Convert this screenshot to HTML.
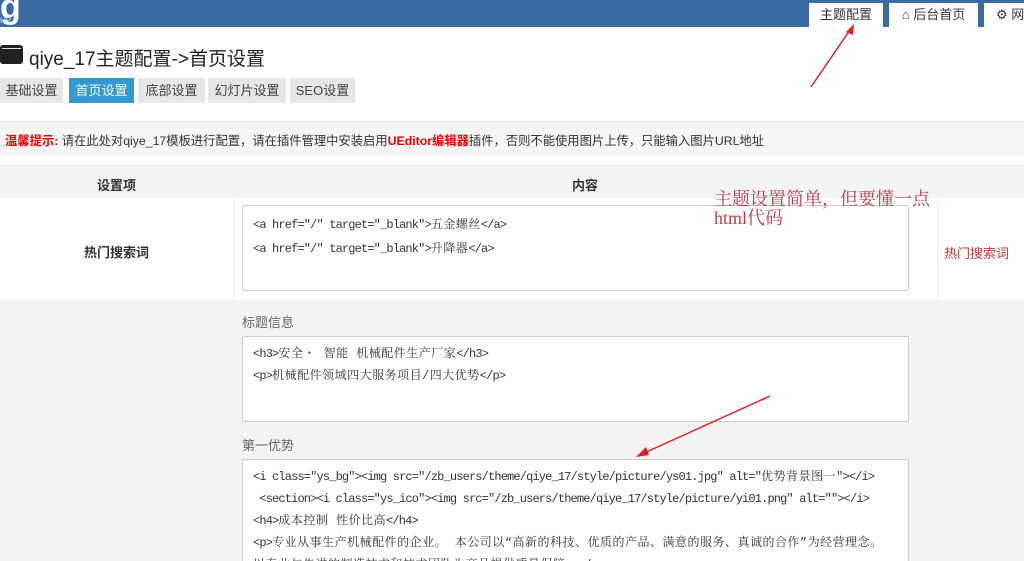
<!DOCTYPE html>
<html><head><meta charset="utf-8"><style>
*{box-sizing:border-box;margin:0;padding:0}
html,body{width:1024px;height:561px;overflow:hidden}
body{background:#fff;font-family:"Liberation Sans","Noto Sans CJK SC",sans-serif;font-size:13px;color:#333;position:relative}
.abs{position:absolute}
.top{left:0;top:0;width:1024px;height:27px;background:#3a6ca3}
.ttab{top:3px;height:24px;background:#fff;font-size:13px;line-height:24px;text-align:center;color:#333}
.tab{top:78px;height:25px;line-height:25px;background:#e6e6e6;font-size:13px;color:#444;text-align:center}
.mono{font-family:"Liberation Mono","Noto Serif CJK SC",monospace;font-size:12px;color:#333;letter-spacing:-0.85px}
.mono s{text-decoration:none;letter-spacing:0.5px}
.ta{background:#fff;border:1px solid #ccc;border-radius:2px}
</style></head><body>
<div class="abs top"></div>
<div class="abs" style="left:0;top:-12px;color:#fff;font-size:34px;font-weight:bold">g</div>
<div class="abs" style="left:0;top:16px;color:#cfe0f5;font-size:8px">HP</div>
<div class="abs ttab" style="left:809px;width:74px">主题配置</div>
<div class="abs ttab" style="left:889px;width:89px">&#8962; 后台首页</div>
<div class="abs ttab" style="left:984px;width:50px;text-align:left;padding-left:12px">⚙ 网</div>
<svg class="abs" style="left:808px;top:22px" width="50" height="68"><line x1="3" y1="65" x2="44" y2="5" stroke="#e02020" stroke-width="1.5"/><polygon points="46,2 38,10 45,13" fill="#e02020"/></svg>

<div class="abs" style="left:0;top:45px;width:23px;height:19px;background:#222;border-radius:3px"></div>
<div class="abs" style="left:2px;top:48px;width:19px;height:3px;border-top:1px solid #ddd"></div>
<div class="abs" style="left:29px;top:44px;font-size:19px;color:#222">qiye_17主题配置->首页设置</div>
<div class="abs tab" style="left:0;width:63px">基础设置</div>
<div class="abs tab" style="left:69px;width:65px;background:#3399d0;color:#fff">首页设置</div>
<div class="abs tab" style="left:138px;width:67px">底部设置</div>
<div class="abs tab" style="left:208px;width:78px">幻灯片设置</div>
<div class="abs tab" style="left:290px;width:65px">SEO设置</div>

<div class="abs" style="left:0;top:121px;width:1024px;height:34px;background:#f5f5f5;border-top:1px solid #e8e8e8"></div>
<div class="abs" style="left:5px;top:131px;font-size:12.3px"><b style="color:#e00">温馨提示:</b> 请在此处对qiye_17模板进行配置，请在插件管理中安装启用<b style="color:#e00">UEditor编辑器</b>插件，否则不能使用图片上传，只能输入图片URL地址</div>

<div class="abs" style="left:0;top:165px;width:1024px;height:33px;background:#f3f3f3;border-top:1px solid #e8e8e8"></div>
<div class="abs" style="left:0;top:175px;width:233px;text-align:center;font-weight:bold">设置项</div>
<div class="abs" style="left:233px;top:175px;width:704px;text-align:center;font-weight:bold">内容</div>
<div class="abs" style="left:233px;top:198px;width:1px;height:102px;background:#eee"></div>
<div class="abs" style="left:937px;top:198px;width:1px;height:102px;background:#eee"></div>
<div class="abs" style="left:0;top:242px;width:233px;text-align:center;font-weight:bold">热门搜索词</div>
<div class="abs ta" style="left:242px;top:205px;width:667px;height:86px"></div>
<div class="abs mono" style="left:253px;top:213px;line-height:24px">&lt;a href="/" target="_blank"&gt;<s>五金螺丝</s>&lt;/a&gt;<br>&lt;a href="/" target="_blank"&gt;<s>升降器</s>&lt;/a&gt;</div>
<div class="abs" style="left:944px;top:243px;color:#c33;font-size:13px">热门搜索词</div>
<div class="abs" style="left:714px;top:190px;color:#c0394a;font-family:'Liberation Serif','Noto Serif CJK SC',serif;font-size:18px;line-height:19px">主题设置简单，但要懂一点<br>html代码</div>

<div class="abs" style="left:0;top:300px;width:1024px;height:261px;background:#f3f3f3"></div>
<div class="abs" style="left:242px;top:312px;color:#666">标题信息</div>
<div class="abs ta" style="left:242px;top:336px;width:667px;height:86px"></div>
<div class="abs mono" style="left:253px;top:343px;line-height:22px">&lt;h3&gt;<s>安全・ 智能 机械配件生产厂家</s>&lt;/h3&gt;<br>&lt;p&gt;<s>机械配件领域四大服务项目/四大优势</s>&lt;/p&gt;</div>
<div class="abs" style="left:242px;top:435px;color:#666">第一优势</div>
<div class="abs ta" style="left:242px;top:459px;width:667px;height:110px"></div>
<div class="abs mono" style="left:253px;top:466px;line-height:22px;white-space:nowrap">&lt;i class="ys_bg"&gt;&lt;img src="/zb_users/theme/qiye_17/style/picture/ys01.jpg" alt="<s>优势背景图一</s>"&gt;&lt;/i&gt;<br>&nbsp;&lt;section&gt;&lt;i class="ys_ico"&gt;&lt;img src="/zb_users/theme/qiye_17/style/picture/yi01.png" alt=""&gt;&lt;/i&gt;<br>&lt;h4&gt;<s>成本控制 性价比高</s>&lt;/h4&gt;<br>&lt;p&gt;<s>专业从事生产机械配件的企业。 本公司以“高新的科技、优质的产品、满意的服务、真诚的合作”为经营理念。</s><br><s>以专业与先进的制造技术和技术团队为产品提供质量保障。</s>&lt;/p&gt;</div>
<svg class="abs" style="left:630px;top:392px" width="145" height="70"><line x1="140" y1="4" x2="12" y2="62" stroke="#e02020" stroke-width="1.5"/><polygon points="6,65 16,55 19,63" fill="#e02020"/></svg>
</body></html>
